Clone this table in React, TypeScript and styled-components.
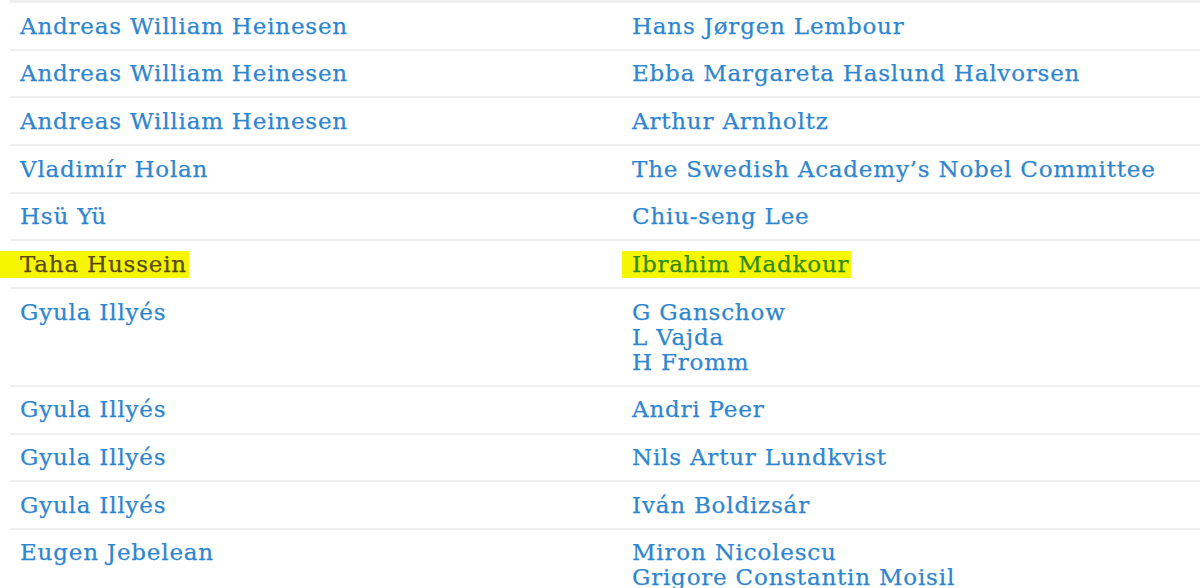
import React from "react";
import styled, { createGlobalStyle } from "styled-components";

const Global = createGlobalStyle`
  html, body { margin: 0; padding: 0; background: #ffffff; }
  body { width: 1200px; height: 588px; overflow: hidden; }
`;

const Table = styled.div`
  margin: 0 0 0 10px;
  border-top: 3px solid #efefef;
  font-family: "DejaVu Serif", "Liberation Serif", serif;
  font-size: 23px;
  letter-spacing: 0.8px;
  line-height: 25px;
`;

const Row = styled.div`
  display: grid;
  grid-template-columns: 612px 1fr;
  border-bottom: 2px solid #efefef;
`;

const Cell = styled.div`
  padding: 10.5px 10px 10.2px 10px;
  display: flex;
  flex-direction: column;
  align-items: flex-start;
`;

const Name = styled.a<{ $mark?: "brown" | "green" }>`
  color: ${(p) => (p.$mark === "brown" ? "#5a4a12" : p.$mark === "green" ? "#2f8a14" : "#2d86cf")};
  text-decoration: none;
  white-space: nowrap;
  -webkit-text-stroke: 0.25px currentColor;
  background: ${(p) => (p.$mark ? "#f6f600" : "transparent")};
  margin-left: ${(p) => (p.$mark === "brown" ? "-20px" : p.$mark === "green" ? "-10px" : "0")};
  padding-left: ${(p) => (p.$mark === "brown" ? "20px" : p.$mark === "green" ? "10px" : "0")};
  padding-right: ${(p) => (p.$mark ? "2px" : "0")};
  padding-top: ${(p) => (p.$mark ? "1px" : "0")};
  padding-bottom: ${(p) => (p.$mark ? "1px" : "0")};
  margin-top: ${(p) => (p.$mark ? "-1px" : "0")};
  margin-bottom: ${(p) => (p.$mark ? "-1px" : "0")};
`;

type Entry = { left: string[]; right: string[]; mark?: boolean };

const rows: Entry[] = [
  { left: ["Andreas William Heinesen"], right: ["Hans Jørgen Lembour"] },
  { left: ["Andreas William Heinesen"], right: ["Ebba Margareta Haslund Halvorsen"] },
  { left: ["Andreas William Heinesen"], right: ["Arthur Arnholtz"] },
  { left: ["Vladimír Holan"], right: ["The Swedish Academy’s Nobel Committee"] },
  { left: ["Hsü Yü"], right: ["Chiu-seng Lee"] },
  { left: ["Taha Hussein"], right: ["Ibrahim Madkour"], mark: true },
  { left: ["Gyula Illyés"], right: ["G Ganschow", "L Vajda", "H Fromm"] },
  { left: ["Gyula Illyés"], right: ["Andri Peer"] },
  { left: ["Gyula Illyés"], right: ["Nils Artur Lundkvist"] },
  { left: ["Gyula Illyés"], right: ["Iván Boldizsár"] },
  { left: ["Eugen Jebelean"], right: ["Miron Nicolescu", "Grigore Constantin Moisil"] },
];

export default function App() {
  return (
    <>
      <Global />
      <Table>
        {rows.map((r, i) => (
          <Row key={i}>
            <Cell>
              {r.left.map((n, j) => (
                <Name key={j} href="#" $mark={r.mark ? "brown" : undefined}>
                  {n}
                </Name>
              ))}
            </Cell>
            <Cell>
              {r.right.map((n, j) => (
                <Name key={j} href="#" $mark={r.mark ? "green" : undefined}>
                  {n}
                </Name>
              ))}
            </Cell>
          </Row>
        ))}
      </Table>
    </>
  );
}
